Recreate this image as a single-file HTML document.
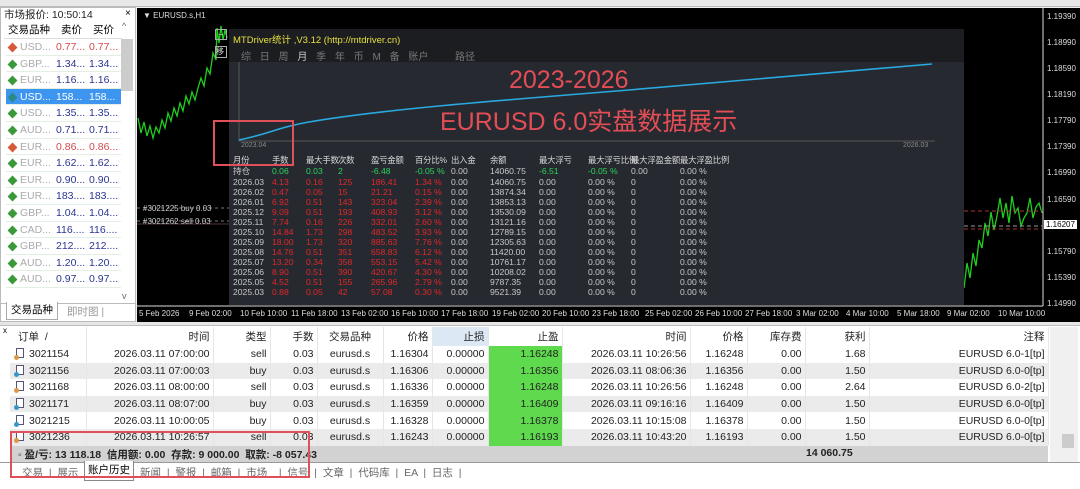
<!DOCTYPE html>
<html><head><meta charset="utf-8">
<style>
*{margin:0;padding:0;box-sizing:border-box}
body{width:1080px;height:489px;overflow:hidden;background:#f0f0f0;font-family:"Liberation Sans","Noto Sans CJK SC",sans-serif;position:relative}
.a{position:absolute;white-space:nowrap}
#mw{left:0;top:7px;width:136px;height:315px;background:#fff;border:1px solid #bbb}
.mwr{position:absolute;left:5px;width:115px;height:16.6px;font-size:10.5px;line-height:16.6px;border-bottom:1px solid #e3efe3}
.mwr span{position:absolute}
.s1{left:14px;color:#aaa}.s2{left:50px}.s3{left:83px}
.ic{position:absolute;left:3px;top:5px;width:7px;height:7px;transform:rotate(45deg)}
.up{color:#2a3590}.dn{color:#d04a4a}
#chart{left:137px;top:8px;width:943px;height:314px;background:#000}
.pl{position:absolute;left:910px;font-size:8px;color:#ddd}
.tl{position:absolute;top:301px;font-size:8px;color:#ddd}
#st{left:229px;top:29px;width:735px;height:276px;background:#262a30;overflow:hidden}
.sr{position:absolute;left:0;width:735px;height:10px;font-size:8.6px;line-height:10px;color:#c8c8c8}
.sr span{position:absolute}
.k1{left:4px}.k2{left:43px}.k3{left:77px}.k4{left:109px}.k5{left:142px}.k6{left:186px}.k7{left:222px}.k8{left:261px}.k9{left:310px}.k10{left:359px}.k11{left:402px}.k12{left:451px}
.r{color:#e02828}.g{color:#2ed15a}
.sh{font-size:8.4px;color:#d8d8d8;letter-spacing:-0.2px}
#bt{left:0;top:322px;width:1080px;height:167px;background:#fff}
table{border-collapse:collapse;table-layout:fixed;font-size:10.5px;color:#222}
td{height:16.6px;line-height:14px;padding:0 3px;text-align:right;border-right:1px solid #e6e6e6;white-space:nowrap;overflow:hidden}
tr.h td{height:19px;background:#fff}
tr.z td{background:#ebebeb}
tr td.tp{background:#5fd94e}
.doc{display:inline-block;width:8px;height:10px;border:1px solid #557;background:#fff;vertical-align:-1px;margin-right:5px;position:relative}
.doc i{position:absolute;left:-3px;bottom:-3px;width:5px;height:5px;border-radius:50%}
.tab{position:absolute;top:465px;font-size:10.5px;color:#666}
</style></head><body>
<div class="a" style="left:0;top:0;width:1080px;height:7px;background:#e8e8e8;border-bottom:1px solid #bbb"></div>

<div id="mw" class="a">
<div class="a" style="left:3px;top:-1px;font-size:10.5px;color:#222">市场报价: 10:50:14</div>
<div class="a" style="left:124px;top:0;font-size:10px">×</div>
<div class="a" style="left:3px;top:13px;width:118px;height:18px;font-size:10.5px;line-height:18px;border-bottom:1px solid #ddd">
<span class="a" style="left:4px">交易品种</span><span class="a" style="left:57px">卖价</span><span class="a" style="left:89px">买价</span></div>
<div class="a" style="left:120px;top:31px;width:12px;height:52px;background:#ccc"></div>
<div class="a" style="left:121px;top:13px;font-size:9px;color:#666">^</div>
<div class="a" style="left:121px;top:283px;font-size:9px;color:#666">v</div>

<div class="mwr" style="top:31px"><i class="ic" style="background:#d65a3a"></i><span class="s1">USD...</span><span class="s2 dn">0.77...</span><span class="s3 dn">0.77...</span></div>
<div class="mwr" style="top:47.6px"><i class="ic" style="background:#3a9a3a"></i><span class="s1">GBP...</span><span class="s2 up">1.34...</span><span class="s3 up">1.34...</span></div>
<div class="mwr" style="top:64.2px"><i class="ic" style="background:#3a9a3a"></i><span class="s1">EUR...</span><span class="s2 up">1.16...</span><span class="s3 up">1.16...</span></div>
<div class="mwr" style="top:80.8px;background:#3d95f0;color:#fff"><i class="ic" style="background:#2a8a8a"></i><span class="s1" style="color:#fff">USD...</span><span class="s2">158...</span><span class="s3">158...</span></div>
<div class="mwr" style="top:97.4px"><i class="ic" style="background:#3a9a3a"></i><span class="s1">USD...</span><span class="s2 up">1.35...</span><span class="s3 up">1.35...</span></div>
<div class="mwr" style="top:114px"><i class="ic" style="background:#3a9a3a"></i><span class="s1">AUD...</span><span class="s2 up">0.71...</span><span class="s3 up">0.71...</span></div>
<div class="mwr" style="top:130.6px"><i class="ic" style="background:#d65a3a"></i><span class="s1">EUR...</span><span class="s2 dn">0.86...</span><span class="s3 dn">0.86...</span></div>
<div class="mwr" style="top:147.2px"><i class="ic" style="background:#3a9a3a"></i><span class="s1">EUR...</span><span class="s2 up">1.62...</span><span class="s3 up">1.62...</span></div>
<div class="mwr" style="top:163.8px"><i class="ic" style="background:#3a9a3a"></i><span class="s1">EUR...</span><span class="s2 up">0.90...</span><span class="s3 up">0.90...</span></div>
<div class="mwr" style="top:180.4px"><i class="ic" style="background:#3a9a3a"></i><span class="s1">EUR...</span><span class="s2 up">183....</span><span class="s3 up">183....</span></div>
<div class="mwr" style="top:197px"><i class="ic" style="background:#3a9a3a"></i><span class="s1">GBP...</span><span class="s2 up">1.04...</span><span class="s3 up">1.04...</span></div>
<div class="mwr" style="top:213.6px"><i class="ic" style="background:#3a9a3a"></i><span class="s1">CAD...</span><span class="s2 up">116....</span><span class="s3 up">116....</span></div>
<div class="mwr" style="top:230.2px"><i class="ic" style="background:#3a9a3a"></i><span class="s1">GBP...</span><span class="s2 up">212....</span><span class="s3 up">212....</span></div>
<div class="mwr" style="top:246.8px"><i class="ic" style="background:#3a9a3a"></i><span class="s1">AUD...</span><span class="s2 up">1.20...</span><span class="s3 up">1.20...</span></div>
<div class="mwr" style="top:263.4px"><i class="ic" style="background:#3a9a3a"></i><span class="s1">AUD...</span><span class="s2 up">0.97...</span><span class="s3 up">0.97...</span></div>
<div class="a" style="left:0;top:295px;width:134px;height:1px;background:#bbb"></div>
<div class="a" style="left:5px;top:294px;width:52px;height:18px;background:#fff;border:1px solid #aaa;border-top:none;font-size:10.5px;line-height:16px;text-align:center">交易品种</div>
<div class="a" style="left:66px;top:296px;font-size:10.5px;color:#999">即时图 |</div>
</div>

<div id="chart" class="a">
<svg width="943" height="314" style="position:absolute;left:0;top:0">
<polyline fill="none" stroke="#1fd01f" stroke-width="1.3" points="1,110 4,125 7,114 10,128 13,118 16,130 19,119 22,125 25,112 28,120 31,105 34,113 37,100 40,108 43,95 46,103 49,88 52,96 55,84 58,92 61,80 64,70 67,78 70,60 73,66 76,45 79,52 80,20 82,35 84,18 86,32 88,22 90,30"/>
<polyline fill="none" stroke="#1fd01f" stroke-width="1.3" points="827,280 830,255 833,270 836,245 839,258 842,232 845,240 848,215 851,228 854,204 857,222 860,208 863,190 866,210 869,195 872,215 875,188 878,205 881,200 884,218 887,210 890,205 893,190 896,210 899,199 902,195 905,205"/>
<line x1="0" y1="200" x2="92" y2="200" stroke="#777" stroke-dasharray="3,3"/>
<line x1="0" y1="213" x2="92" y2="213" stroke="#777" stroke-dasharray="3,3"/>
<line x1="0" y1="216" x2="92" y2="216" stroke="#533" />
<line x1="827" y1="203" x2="905" y2="203" stroke="#a33" stroke-dasharray="4,3"/>
<line x1="827" y1="218" x2="905" y2="218" stroke="#999" stroke-dasharray="4,3"/>
<line x1="827" y1="221" x2="905" y2="221" stroke="#a33" stroke-dasharray="4,3"/>
<line x1="906" y1="0" x2="906" y2="298" stroke="#ddd"/>
<line x1="0" y1="298" x2="906" y2="298" stroke="#ddd"/>
</svg>
<div class="a" style="left:6px;top:3px;font-size:8px;color:#ddd">▼ EURUSD.s,H1</div>
<div class="a" style="left:6px;top:196px;font-size:8px;color:#ccc">#3021225 buy 0.03</div>
<div class="a" style="left:6px;top:209px;font-size:8px;color:#ccc">#3021262 sell 0.03</div>
<div class="a" style="left:78px;top:21px;width:12px;height:11px;border:1px solid #aaa;font-size:8px;color:#ddd;line-height:9px;text-align:center">−</div>
<div class="a" style="left:78px;top:38px;width:12px;height:12px;border:1px solid #aaa;font-size:8px;color:#ddd;line-height:10px">移</div>
<div class="pl" style="top:4px">1.19390</div><div class="pl" style="top:30px">1.18990</div><div class="pl" style="top:56px">1.18590</div><div class="pl" style="top:82px">1.18190</div><div class="pl" style="top:108px">1.17790</div><div class="pl" style="top:134px">1.17390</div><div class="pl" style="top:160px">1.16990</div><div class="pl" style="top:187px">1.16590</div>
<div class="pl" style="top:212px;left:907px;background:#fff;color:#000;padding:0 2px">1.16207</div>
<div class="pl" style="top:239px">1.15790</div><div class="pl" style="top:265px">1.15390</div><div class="pl" style="top:291px">1.14990</div>
<div class="tl" style="left:2px">5 Feb 2026</div><div class="tl" style="left:52px">9 Feb 02:00</div><div class="tl" style="left:103px">10 Feb 10:00</div><div class="tl" style="left:154px">11 Feb 18:00</div><div class="tl" style="left:204px">13 Feb 02:00</div><div class="tl" style="left:254px">16 Feb 10:00</div><div class="tl" style="left:304px">17 Feb 18:00</div><div class="tl" style="left:355px">19 Feb 02:00</div><div class="tl" style="left:405px">20 Feb 10:00</div><div class="tl" style="left:455px">23 Feb 18:00</div><div class="tl" style="left:508px">25 Feb 02:00</div><div class="tl" style="left:558px">26 Feb 10:00</div><div class="tl" style="left:608px">27 Feb 18:00</div><div class="tl" style="left:659px">3 Mar 02:00</div><div class="tl" style="left:709px">4 Mar 10:00</div><div class="tl" style="left:760px">5 Mar 18:00</div><div class="tl" style="left:810px">9 Mar 02:00</div><div class="tl" style="left:861px">10 Mar 10:00</div>
</div>

<div id="st" class="a">
<div class="a" style="left:0;top:0;width:735px;height:33px;background:#1c1d20"></div>
<div class="a" style="left:4px;top:3px;font-size:9.5px;color:#e6e040">MTDriver统计 ,V3.12 (http://mtdriver.cn)</div>
<div class="a" style="left:12px;top:19px;font-size:10px;color:#777;word-spacing:6px">综 日 周 <b style="color:#ccc;font-weight:normal">月</b> 季 年 币 M 备 账户</div>
<div class="a" style="left:226px;top:19px;font-size:10px;color:#777">路径</div>
<svg class="a" style="left:0;top:33px" width="735" height="90">
<line x1="10" y1="0" x2="10" y2="79" stroke="#555"/>
<line x1="10" y1="79" x2="706" y2="79" stroke="#555"/>
<path d="M10,78 C40,72 50,65 80,60 C150,48 250,40 400,28 C500,20 600,10 703,2" fill="none" stroke="#2aa8e0" stroke-width="1.6"/>
</svg>
<div class="a" style="left:12px;top:113px;font-size:7px;color:#888">2023.04</div>
<div class="a" style="left:674px;top:113px;font-size:7px;color:#888">2026.03</div>
<div class="a" style="left:280px;top:37px;font-size:25px;color:#e34d55">2023-2026</div>
<div class="a" style="left:211px;top:73px;font-size:25px;color:#e34d55">EURUSD 6.0实盘数据展示</div>

<div class="sr sh" style="top:126px"><span class="k1">月份</span><span class="k2">手数</span><span class="k3">最大手数</span><span class="k4">次数</span><span class="k5">盈亏金额</span><span class="k6">百分比%</span><span class="k7">出入金</span><span class="k8">余额</span><span class="k9">最大浮亏</span><span class="k10">最大浮亏比例</span><span class="k11">最大浮盈金额</span><span class="k12">最大浮盈比例</span></div>
<div class="sr" style="top:137px"><span class="k1">持仓</span><span class="k2 g">0.06</span><span class="k3 g">0.03</span><span class="k4 g">2</span><span class="k5 g">-6.48</span><span class="k6 g">-0.05 %</span><span class="k7">0.00</span><span class="k8">14060.75</span><span class="k9 g">-6.51</span><span class="k10 g">-0.05 %</span><span class="k11">0.00</span><span class="k12">0.00 %</span></div>
<div class="sr" style="top:148px"><span class="k1">2026.03</span><span class="k2 r">4.13</span><span class="k3 r">0.16</span><span class="k4 r">125</span><span class="k5 r">186.41</span><span class="k6 r">1.34 %</span><span class="k7">0.00</span><span class="k8">14060.75</span><span class="k9">0.00</span><span class="k10">0.00 %</span><span class="k11">0</span><span class="k12">0.00 %</span></div>
<div class="sr" style="top:158px"><span class="k1">2026.02</span><span class="k2 r">0.47</span><span class="k3 r">0.05</span><span class="k4 r">15</span><span class="k5 r">21.21</span><span class="k6 r">0.15 %</span><span class="k7">0.00</span><span class="k8">13874.34</span><span class="k9">0.00</span><span class="k10">0.00 %</span><span class="k11">0</span><span class="k12">0.00 %</span></div>
<div class="sr" style="top:168px"><span class="k1">2026.01</span><span class="k2 r">6.92</span><span class="k3 r">0.51</span><span class="k4 r">143</span><span class="k5 r">323.04</span><span class="k6 r">2.39 %</span><span class="k7">0.00</span><span class="k8">13853.13</span><span class="k9">0.00</span><span class="k10">0.00 %</span><span class="k11">0</span><span class="k12">0.00 %</span></div>
<div class="sr" style="top:178px"><span class="k1">2025.12</span><span class="k2 r">9.09</span><span class="k3 r">0.51</span><span class="k4 r">193</span><span class="k5 r">408.93</span><span class="k6 r">3.12 %</span><span class="k7">0.00</span><span class="k8">13530.09</span><span class="k9">0.00</span><span class="k10">0.00 %</span><span class="k11">0</span><span class="k12">0.00 %</span></div>
<div class="sr" style="top:188px"><span class="k1">2025.11</span><span class="k2 r">7.74</span><span class="k3 r">0.16</span><span class="k4 r">226</span><span class="k5 r">332.01</span><span class="k6 r">2.60 %</span><span class="k7">0.00</span><span class="k8">13121.16</span><span class="k9">0.00</span><span class="k10">0.00 %</span><span class="k11">0</span><span class="k12">0.00 %</span></div>
<div class="sr" style="top:198px"><span class="k1">2025.10</span><span class="k2 r">14.84</span><span class="k3 r">1.73</span><span class="k4 r">298</span><span class="k5 r">483.52</span><span class="k6 r">3.93 %</span><span class="k7">0.00</span><span class="k8">12789.15</span><span class="k9">0.00</span><span class="k10">0.00 %</span><span class="k11">0</span><span class="k12">0.00 %</span></div>
<div class="sr" style="top:208px"><span class="k1">2025.09</span><span class="k2 r">18.00</span><span class="k3 r">1.73</span><span class="k4 r">320</span><span class="k5 r">885.63</span><span class="k6 r">7.76 %</span><span class="k7">0.00</span><span class="k8">12305.63</span><span class="k9">0.00</span><span class="k10">0.00 %</span><span class="k11">0</span><span class="k12">0.00 %</span></div>
<div class="sr" style="top:218px"><span class="k1">2025.08</span><span class="k2 r">14.76</span><span class="k3 r">0.51</span><span class="k4 r">351</span><span class="k5 r">658.83</span><span class="k6 r">6.12 %</span><span class="k7">0.00</span><span class="k8">11420.00</span><span class="k9">0.00</span><span class="k10">0.00 %</span><span class="k11">0</span><span class="k12">0.00 %</span></div>
<div class="sr" style="top:228px"><span class="k1">2025.07</span><span class="k2 r">13.20</span><span class="k3 r">0.34</span><span class="k4 r">358</span><span class="k5 r">553.15</span><span class="k6 r">5.42 %</span><span class="k7">0.00</span><span class="k8">10761.17</span><span class="k9">0.00</span><span class="k10">0.00 %</span><span class="k11">0</span><span class="k12">0.00 %</span></div>
<div class="sr" style="top:238px"><span class="k1">2025.06</span><span class="k2 r">8.90</span><span class="k3 r">0.51</span><span class="k4 r">390</span><span class="k5 r">420.67</span><span class="k6 r">4.30 %</span><span class="k7">0.00</span><span class="k8">10208.02</span><span class="k9">0.00</span><span class="k10">0.00 %</span><span class="k11">0</span><span class="k12">0.00 %</span></div>
<div class="sr" style="top:248px"><span class="k1">2025.05</span><span class="k2 r">4.52</span><span class="k3 r">0.51</span><span class="k4 r">155</span><span class="k5 r">265.96</span><span class="k6 r">2.79 %</span><span class="k7">0.00</span><span class="k8">9787.35</span><span class="k9">0.00</span><span class="k10">0.00 %</span><span class="k11">0</span><span class="k12">0.00 %</span></div>
<div class="sr" style="top:258px"><span class="k1">2025.03</span><span class="k2 r">0.88</span><span class="k3 r">0.05</span><span class="k4 r">42</span><span class="k5 r">57.08</span><span class="k6 r">0.30 %</span><span class="k7">0.00</span><span class="k8">9521.39</span><span class="k9">0.00</span><span class="k10">0.00 %</span><span class="k11">0</span><span class="k12">0.00 %</span></div>
</div>
<div class="a" style="left:213px;top:120px;width:81px;height:46px;border:2px solid #e0505a"></div>

<div id="bt" class="a">
<div class="a" style="left:0;top:0;width:1080px;height:4px;background:#e6e6e6;border-bottom:1px solid #bbb"></div>
<div class="a" style="left:3px;top:4px;font-size:8px">x</div>
<table class="a" style="left:10px;top:5px;width:1038px">
<colgroup><col style="width:76px"><col style="width:127px"><col style="width:57px"><col style="width:47px"><col style="width:66px"><col style="width:49px"><col style="width:56px"><col style="width:74px"><col style="width:128px"><col style="width:57px"><col style="width:58px"><col style="width:64px"><col style="width:179px"></colgroup>
<tr class="h"><td style="text-align:left;padding-left:8px">订单 &nbsp;/</td><td>时间</td><td>类型</td><td>手数</td><td style="text-align:center">交易品种</td><td>价格</td><td style="background:#dce9f5">止损</td><td>止盈</td><td>时间</td><td>价格</td><td>库存费</td><td>获利</td><td>注释</td></tr>
<tr><td style="text-align:left;padding-left:6px"><span class="doc"><i style="background:#d94"></i></span>3021154</td><td>2026.03.11 07:00:00</td><td>sell</td><td>0.03</td><td style="text-align:center">eurusd.s</td><td>1.16304</td><td>0.00000</td><td class="tp">1.16248</td><td>2026.03.11 10:26:56</td><td>1.16248</td><td>0.00</td><td>1.68</td><td>EURUSD 6.0-1[tp]</td></tr>
<tr class="z"><td style="text-align:left;padding-left:6px"><span class="doc"><i style="background:#39c"></i></span>3021156</td><td>2026.03.11 07:00:03</td><td>buy</td><td>0.03</td><td style="text-align:center">eurusd.s</td><td>1.16306</td><td>0.00000</td><td class="tp">1.16356</td><td>2026.03.11 08:06:36</td><td>1.16356</td><td>0.00</td><td>1.50</td><td>EURUSD 6.0-0[tp]</td></tr>
<tr><td style="text-align:left;padding-left:6px"><span class="doc"><i style="background:#d94"></i></span>3021168</td><td>2026.03.11 08:00:00</td><td>sell</td><td>0.03</td><td style="text-align:center">eurusd.s</td><td>1.16336</td><td>0.00000</td><td class="tp">1.16248</td><td>2026.03.11 10:26:56</td><td>1.16248</td><td>0.00</td><td>2.64</td><td>EURUSD 6.0-2[tp]</td></tr>
<tr class="z"><td style="text-align:left;padding-left:6px"><span class="doc"><i style="background:#39c"></i></span>3021171</td><td>2026.03.11 08:07:00</td><td>buy</td><td>0.03</td><td style="text-align:center">eurusd.s</td><td>1.16359</td><td>0.00000</td><td class="tp">1.16409</td><td>2026.03.11 09:16:16</td><td>1.16409</td><td>0.00</td><td>1.50</td><td>EURUSD 6.0-0[tp]</td></tr>
<tr><td style="text-align:left;padding-left:6px"><span class="doc"><i style="background:#39c"></i></span>3021215</td><td>2026.03.11 10:00:05</td><td>buy</td><td>0.03</td><td style="text-align:center">eurusd.s</td><td>1.16328</td><td>0.00000</td><td class="tp">1.16378</td><td>2026.03.11 10:15:08</td><td>1.16378</td><td>0.00</td><td>1.50</td><td>EURUSD 6.0-0[tp]</td></tr>
<tr class="z"><td style="text-align:left;padding-left:6px"><span class="doc"><i style="background:#d94"></i></span>3021236</td><td>2026.03.11 10:26:57</td><td>sell</td><td>0.03</td><td style="text-align:center">eurusd.s</td><td>1.16243</td><td>0.00000</td><td class="tp">1.16193</td><td>2026.03.11 10:43:20</td><td>1.16193</td><td>0.00</td><td>1.50</td><td>EURUSD 6.0-0[tp]</td></tr>
</table>
<div class="a" style="left:10px;top:124px;width:1038px;height:16px;background:#d2d2d2"></div>
<div class="a" style="left:18px;top:125px;font-size:10.5px;font-weight:bold;color:#222">◦ 盈/亏: 13 118.18 &nbsp;信用额: 0.00 &nbsp;存款: 9 000.00 &nbsp;取款: -8 057.43</div>
<div class="a" style="left:806px;top:125px;font-size:10.5px;font-weight:bold;color:#222">14 060.75</div>
<div class="a" style="left:1050px;top:5px;width:28px;height:135px;background:#f0f0f0"></div>
<div class="a" style="left:1062px;top:112px;width:12px;height:14px;background:#ccc"></div>
<div class="a" style="left:0;top:140px;width:1080px;height:1px;background:#999"></div>
</div>
<div class="tab" style="left:22px">交易 &nbsp;| &nbsp;展示</div>
<div class="a" style="left:84px;top:461px;width:50px;height:20px;border:1px solid #888;border-top:none;background:#fff;font-size:10.5px;text-align:center;line-height:18px">账户历史</div>
<div class="tab" style="left:140px">新闻 &nbsp;| &nbsp;警报 &nbsp;| &nbsp;邮箱 &nbsp;| &nbsp;市场 &nbsp;&nbsp;&nbsp;| &nbsp;信号 &nbsp;| &nbsp;文章 &nbsp;| &nbsp;代码库 &nbsp;| &nbsp;EA &nbsp;| &nbsp;日志 &nbsp;|</div>
<div class="a" style="left:10px;top:431px;width:300px;height:47px;border:2px solid #e0505a"></div>
</body></html>
